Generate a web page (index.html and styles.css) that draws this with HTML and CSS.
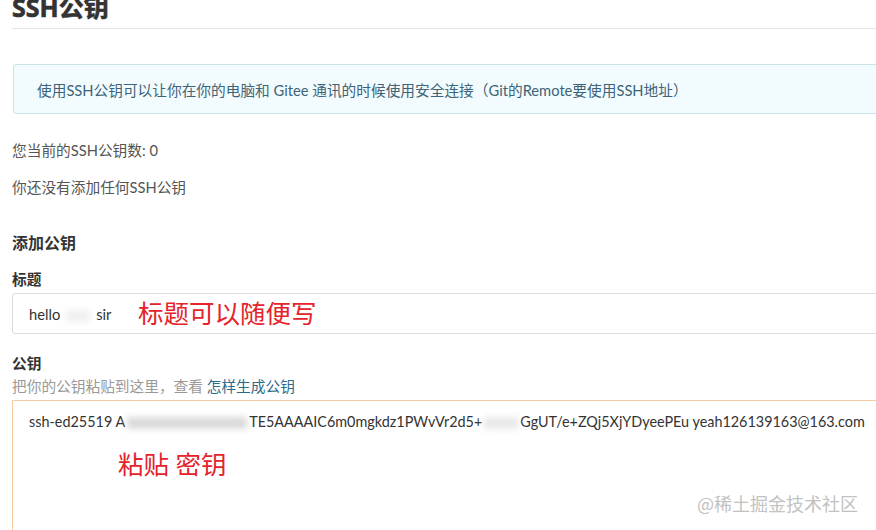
FILE: index.html
```html
<!DOCTYPE html>
<html lang="zh-CN">
<head>
<meta charset="utf-8">
<link rel="stylesheet" href="styles.css">
</head>
<body>
<div class="page">
  <h1 class="title">SSH公钥</h1>
  <div class="alert">使用SSH公钥可以让你在你的电脑和 Gitee 通讯的时候使用安全连接（Git的Remote要使用SSH地址）</div>
  <p class="info">您当前的SSH公钥数: 0</p>
  <p class="info info-2">你还没有添加任何SSH公钥</p>
  <h3 class="section">添加公钥</h3>
  <label class="label">标题</label>
  <div class="input">
    <span class="val">hello<span class="blur b1"></span>sir</span>
    <span class="note note-title">标题可以随便写</span>
  </div>
  <label class="label label-key">公钥</label>
  <div class="hint">把你的公钥粘贴到这里，查看 <a class="link">怎样生成公钥</a></div>
  <div class="textarea">
    <div class="key">ssh-ed25519 A<span class="blur b2"></span>TE5AAAAIC6m0mgkdz1PWvVr2d5+<span class="blur b3"></span>GgUT/e+ZQj5XjYDyeePEu yeah126139163@163.com</div>
    <div class="note note-key">粘贴 密钥</div>
  </div>
</div>
<div class="watermark">@稀土掘金技术社区</div>
</body>
</html>
```
FILE: styles.css
```css
html, body { margin: 0; padding: 0; background: #fff; }
body {
  width: 876px; height: 530px; overflow: hidden; position: relative;
  font-family: Lato, "Noto Sans CJK SC", sans-serif;
  font-size: 14.7px; color: #333;
}
.page { padding-left: 12px; margin-right: -30px; }
.title {
  margin: -9px 0 0; font-size: 25px; line-height: 32px; font-weight: 700; color: #333;
  font-family: "Open Sans", "Noto Sans CJK SC", sans-serif;
  -webkit-text-stroke: 0.6px #333;
  padding-bottom: 5px; border-bottom: 1px solid #e6e6e6;
}
.alert {
  margin: 35px 0 0 1px; height: 50px; box-sizing: border-box;
  padding: 0 0 0 23px; display: flex; align-items: center;
  background: #f2fbfd; border: 1px solid #cbe3e8; border-radius: 3px;
  color: #3d6478;
}
.info { margin: 26px 0 0; line-height: 20px; color: #555; }
.info-2 { margin-top: 17px; }
.section { margin: 35px 0 0; font-size: 16px; font-weight: 700; line-height: 22px; color: #333; }
.label { display: block; margin-top: 15px; font-weight: 700; color: #333; line-height: 20px; }
.input {
  margin-top: 4px; height: 41px; box-sizing: border-box; display: flex; align-items: center;
  border: 1px solid #dcdcdc; border-radius: 3px; padding-left: 16px;
}
.val { color: #333; width: 109px; }
.blur { display: inline-block; height: 12px; background: #e8e8e8; filter: blur(3px); vertical-align: middle; }
.b1 { width: 24px; margin: 0 6px; background: #f0f0f0; }
.b2 { width: 120px; margin: 0 2px; background: #dadada; }
.b3 { width: 34px; margin: 0 2px; }
.note { color: #e4232b; font-size: 25.5px; line-height: 30px; }
.note-title { margin-top: -2px; }
.label-key { margin-top: 19px; }
.hint { color: #999; line-height: 20px; margin-top: 3px; }
.link { color: #2d6b8a; text-decoration: none; }
.textarea {
  margin-top: 4px; height: 140px; box-sizing: border-box;
  border: 1px solid #f6cba1; border-right: none; padding: 11px 0 0 16px;
}
.key { line-height: 20px; color: #333; white-space: nowrap; font-size: 14.4px; }
.note-key { margin: 17px 0 0 89px; }
.watermark {
  position: absolute; right: 18px; bottom: 14px;
  color: #c2c2c2; font-size: 18px; font-family: "Noto Sans CJK SC", sans-serif;
}
```
